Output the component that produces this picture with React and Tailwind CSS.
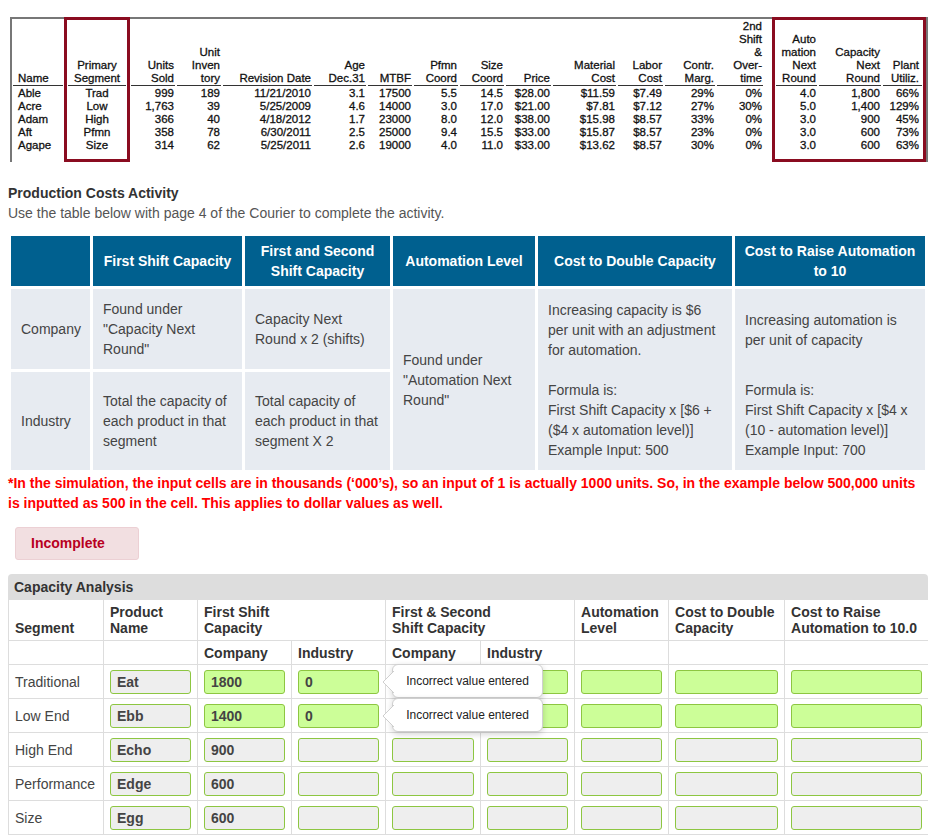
import React from 'react'

/* Scanned Courier excerpt: column widths follow the printed page */
const TOP_COLS = [
  { w: 'w-[46px]', h: ['Units', 'Sold'], v: ['999', '1,763', '366', '358', '314'] },
  { w: 'w-[46px]', h: ['Unit', 'Inven', 'tory'], v: ['189', '39', '40', '78', '62'] },
  { w: 'w-[91px]', h: ['Revision Date'], v: ['11/21/2010', '5/25/2009', '4/18/2012', '6/30/2011', '5/25/2011'] },
  { w: 'w-[54px]', h: ['Age', 'Dec.31'], v: ['3.1', '4.6', '1.7', '2.5', '2.6'] },
  { w: 'w-[46px]', h: ['MTBF'], v: ['17500', '14000', '23000', '25000', '19000'] },
  { w: 'w-[46px]', h: ['Pfmn', 'Coord'], v: ['5.5', '3.0', '8.0', '9.4', '4.0'] },
  { w: 'w-[46px]', h: ['Size', 'Coord'], v: ['14.5', '17.0', '12.0', '15.5', '11.0'] },
  { w: 'w-[47px]', h: ['Price'], v: ['$28.00', '$21.00', '$38.00', '$33.00', '$33.00'] },
  { w: 'w-[65px]', h: ['Material', 'Cost'], v: ['$11.59', '$7.81', '$15.98', '$15.87', '$13.62'] },
  { w: 'w-[47px]', h: ['Labor', 'Cost'], v: ['$7.49', '$7.12', '$8.57', '$8.57', '$8.57'] },
  { w: 'w-[52px]', h: ['Contr.', 'Marg.'], v: ['29%', '27%', '33%', '23%', '30%'] },
  { w: 'w-[48px]', h: ['2nd', 'Shift', '&', 'Over-', 'time'], v: ['0%', '30%', '0%', '0%', '0%'] },
]

const BOX_COLS = [
  { w: 'w-[43px]', h: ['Auto', 'mation', 'Next', 'Round'], v: ['4.0', '5.0', '3.0', '3.0', '3.0'] },
  { w: 'w-[64px]', h: ['Capacity', 'Next', 'Round'], v: ['1,800', '1,400', '900', '600', '600'] },
  { w: 'w-[41px]', h: ['Plant', 'Utiliz.'], v: ['66%', '129%', '45%', '73%', '63%'], pr: 'pr-[3px]' },
]

function TopCol({ col, align = 'text-right pr-[1px]', headH = 'h-[67px]' }) {
  return (
    <div className={`${col.w} shrink-0 px-[1px]`}>
      <div className={`${headH} flex flex-col justify-end border-b border-[#333] ${align} ${col.pr || ''}`}>
        {col.h.map((t) => (
          <div key={t}>{t}</div>
        ))}
      </div>
      <div className={`pt-[1px] ${align} ${col.pr || ''}`}>
        {col.v.map((t, i) => (
          <div key={i}>{t}</div>
        ))}
      </div>
    </div>
  )
}

function CourierTable() {
  return (
    <div className="ml-[10px] mt-[17px] flex h-[145px] w-[918px] border-l-2 border-r-2 border-t-2 border-[#777] text-[11.5px] leading-[13px] text-[#111] [-webkit-text-stroke:0.3px_#111]">
      <TopCol
        col={{ w: 'w-[52px]', h: ['Name'], v: ['Able', 'Acre', 'Adam', 'Aft', 'Agape'] }}
        align="text-left pl-[5px]"
      />
      <div className="-mt-[2px] h-[145px] w-[66px] shrink-0 border-[3px] border-[#8a0c20]">
        <TopCol
          col={{ w: 'w-[60px]', h: ['Primary', 'Segment'], v: ['Trad', 'Low', 'High', 'Pfmn', 'Size'] }}
          align="text-center"
          headH="h-[66px]"
        />
      </div>
      {TOP_COLS.map((c) => (
        <TopCol key={c.h.join()} col={c} />
      ))}
      <div className="w-[8px] shrink-0" />
      <div className="-mt-[2px] flex h-[145px] w-[154px] shrink-0 border-[3px] border-[#8a0c20]">
        {BOX_COLS.map((c) => (
          <TopCol key={c.h.join()} col={c} headH="h-[66px]" />
        ))}
      </div>
    </div>
  )
}

function Lines({ items }) {
  return items.map((t, i) => (
    <div key={i} className="whitespace-nowrap">
      {t}
    </div>
  ))
}

function GuideTable() {
  const head = 'flex items-center justify-center bg-[#00608f] text-center font-bold text-white'
  const body = 'flex items-center bg-[#e7ebf1] px-[10px] text-[#444]'
  return (
    <div className="ml-[11px] mt-[13px] grid w-[914px] grid-cols-[79px_149px_145px_142px_194px_190px] grid-rows-[50px_80px_98px] gap-[3px] text-[14px] leading-[20px]">
      <div className={head} />
      <div className={head}>First Shift Capacity</div>
      <div className={head}>
        First and Second
        <br />
        Shift Capacity
      </div>
      <div className={head}>Automation Level</div>
      <div className={head}>Cost to Double Capacity</div>
      <div className={head}>
        Cost to Raise Automation
        <br />
        to 10
      </div>

      <div className={body}>Company</div>
      <div className={body}>
        <div>
          <Lines items={['Found under', '"Capacity Next', 'Round"']} />
        </div>
      </div>
      <div className={body}>
        <div>
          <Lines items={['Capacity Next', 'Round x 2 (shifts)']} />
        </div>
      </div>
      <div className={`${body} row-span-2`}>
        <div>
          <Lines items={['Found under', '"Automation Next', 'Round"']} />
        </div>
      </div>
      <div className="row-span-2 bg-[#e7ebf1] px-[10px] pt-[11px] text-[#444]">
        <Lines items={['Increasing capacity is $6', 'per unit with an adjustment', 'for automation.']} />
        <div className="h-[20px]" />
        <Lines items={['Formula is:', 'First Shift Capacity x [$6 +', '($4 x automation level)]', 'Example Input: 500']} />
      </div>
      <div className="row-span-2 bg-[#e7ebf1] px-[10px] pt-[21px] text-[#444]">
        <Lines items={['Increasing automation is', 'per unit of capacity']} />
        <div className="h-[30px]" />
        <Lines items={['Formula is:', 'First Shift Capacity x [$4 x', '(10 - automation level)]', 'Example Input: 700']} />
      </div>

      <div className={body}>Industry</div>
      <div className={body}>
        <div>
          <Lines items={['Total the capacity of', 'each product in that', 'segment']} />
        </div>
      </div>
      <div className={body}>
        <div>
          <Lines items={['Total capacity of', 'each product in that', 'segment X 2']} />
        </div>
      </div>
    </div>
  )
}

function Field({ value, green }) {
  return (
    <div
      className={`h-[24px] rounded-[3px] border border-[#8dc641] px-[6px] text-[14px] font-bold leading-[22px] text-[#444] ${
        green ? 'bg-[#ccfe98]' : 'bg-[#eeeeee]'
      }`}
    >
      {value}
    </div>
  )
}

function Tip() {
  return (
    <div className="absolute -top-[6px] left-0 z-10 flex h-[34px] w-[151px] items-center justify-center rounded-[6px] border border-[#cfcfcf] bg-white text-[12px] text-[#222] shadow-[0_2px_6px_rgba(0,0,0,0.18)]">
      <svg className="absolute -left-[11px] top-[6px]" width="12" height="22" viewBox="0 0 12 22">
        <polygon points="12,0 1,11 12,22" fill="white" />
        <polyline points="12,0 1,11 12,22" fill="none" stroke="#cfcfcf" strokeWidth="1" />
      </svg>
      Incorrect value entered
    </div>
  )
}

const ROWS = [
  { seg: 'Traditional', name: 'Eat', fc: '1800', fi: '0', done: true },
  { seg: 'Low End', name: 'Ebb', fc: '1400', fi: '0', done: true },
  { seg: 'High End', name: 'Echo', fc: '900' },
  { seg: 'Performance', name: 'Edge', fc: '600' },
  { seg: 'Size', name: 'Egg', fc: '600' },
]

function CapacityPanel() {
  const th = 'border border-[#dddddd] px-[6px] text-left align-bottom font-bold text-[#333]'
  const td = 'border border-[#dddddd] px-[6px] align-middle'
  return (
    <div className="ml-[8px] mt-[14px] w-[920px] overflow-hidden rounded-t-[4px]">
      <div className="h-[25px] bg-[#dddddd] px-[6px] text-[14px] font-bold leading-[27px] text-[#333]">
        Capacity Analysis
      </div>
      <table className="w-[920px] table-fixed border-collapse text-[14px] leading-[16px]">
        <colgroup>
          <col className="w-[95px]" />
          <col className="w-[94px]" />
          <col className="w-[94px]" />
          <col className="w-[94px]" />
          <col className="w-[95px]" />
          <col className="w-[94px]" />
          <col className="w-[94px]" />
          <col className="w-[116px]" />
          <col className="w-[144px]" />
        </colgroup>
        <thead>
          <tr className="h-[41px]">
            <th className={`${th} pb-[4px]`}>Segment</th>
            <th className={`${th} pb-[4px]`}>
              Product
              <br />
              Name
            </th>
            <th colSpan={2} className={`${th} pb-[4px]`}>
              First Shift
              <br />
              Capacity
            </th>
            <th colSpan={2} className={`${th} pb-[4px]`}>
              First &amp; Second
              <br />
              Shift Capacity
            </th>
            <th className={`${th} pb-[4px]`}>
              Automation
              <br />
              Level
            </th>
            <th className={`${th} pb-[4px]`}>
              Cost to Double
              <br />
              Capacity
            </th>
            <th className={`${th} pb-[4px]`}>
              Cost to Raise
              <br />
              Automation to 10.0
            </th>
          </tr>
          <tr className="h-[24px]">
            <th className={th} />
            <th className={th} />
            <th className={`${th} align-middle`}>Company</th>
            <th className={`${th} align-middle`}>Industry</th>
            <th className={`${th} align-middle`}>Company</th>
            <th className={`${th} align-middle`}>Industry</th>
            <th className={th} />
            <th className={th} />
            <th className={th} />
          </tr>
        </thead>
        <tbody>
          {ROWS.map((r) => (
            <tr key={r.seg} className="h-[34px]">
              <td className={`${td} text-[#444]`}>{r.seg}</td>
              <td className={td}>
                <Field value={r.name} />
              </td>
              <td className={td}>
                <Field value={r.fc} green={r.done} />
              </td>
              <td className={td}>
                <Field value={r.fi} green={r.done} />
              </td>
              <td className={td}>
                <div className="relative">
                  <Field green={r.done} />
                  {r.done && <Tip />}
                </div>
              </td>
              <td className={td}>
                <Field green={r.done} />
              </td>
              <td className={td}>
                <Field green={r.done} />
              </td>
              <td className={td}>
                <Field green={r.done} />
              </td>
              <td className={td}>
                <Field green={r.done} />
              </td>
            </tr>
          ))}
        </tbody>
      </table>
    </div>
  )
}

export default function App() {
  return (
    <div className="h-[836px] w-[946px] overflow-hidden bg-white font-['Liberation_Sans',Arial,sans-serif]">
      <CourierTable />

      <div className="ml-[8px] mt-[21px] text-[14px] leading-[20px]">
        <div className="font-bold text-[#333]">Production Costs Activity</div>
        <div className="text-[#555]">Use the table below with page 4 of the Courier to complete the activity.</div>
      </div>

      <GuideTable />

      <div className="ml-[8px] mt-[3px] whitespace-nowrap text-[14px] font-bold leading-[20px] text-[#ff0000]">
        *In the simulation, the input cells are in thousands (‘000’s), so an input of 1 is actually 1000 units. So, in the example below 500,000 units
        <br />
        is inputted as 500 in the cell. This applies to dollar values as well.
      </div>

      <div className="ml-[15px] mt-[14px] flex h-[33px] w-[124px] items-center rounded-[3px] border border-[#ecd0d4] bg-[#f2dfe1] pl-[15px] text-[14px] font-bold text-[#b8001f]">
        Incomplete
      </div>

      <CapacityPanel />
    </div>
  )
}
